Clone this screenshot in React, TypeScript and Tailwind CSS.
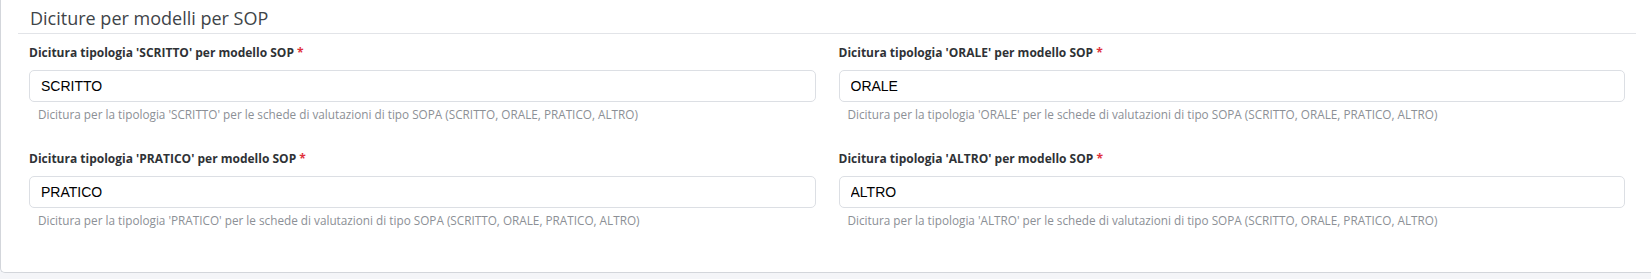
import React from "react";

const fields = [
  { key: "SCRITTO" },
  { key: "ORALE" },
  { key: "PRATICO" },
  { key: "ALTRO" },
];

function Field({ k }: { k: string }) {
  return (
    <div className="flex flex-col">
      <label className="pt-[2px] text-[12px] leading-[20px] font-bold text-[#2f3236] font-['Open_Sans',sans-serif]">
        Dicitura tipologia '{k}' per modello SOP <span className="text-[#e0313c]">*</span>
      </label>
      <input
        readOnly
        value={k}
        className="mt-[7px] h-[32px] w-full rounded-[5px] border border-[#dcdfe4] bg-white px-[11px] text-[14px] text-black outline-none font-['Liberation_Sans',Arial,sans-serif]"
      />
      <div className="mt-[3px] pl-[9px] text-[11.75px] leading-[18px] text-[#8c9096] font-['Open_Sans',sans-serif]">
        Dicitura per la tipologia '{k}' per le schede di valutazioni di tipo SOPA (SCRITTO, ORALE, PRATICO, ALTRO)
      </div>
    </div>
  );
}

export default function App() {
  return (
    <div className="w-[1651px] h-[279px] overflow-hidden bg-[#f4f5f8]">
      <div className="bg-white border-l border-b border-[#d3d6db] rounded-bl-[5px] pl-[17px] pr-[15px] pb-[43px]">
        <div className="h-[34px] border-b border-[#e2e4e8] pl-[12px] pt-[4px]">
          <h2 className="text-[18px] leading-[28px] font-normal text-[#404448] font-['Open_Sans',sans-serif]">
            Diciture per modelli per SOP
          </h2>
        </div>
        <div className="grid grid-cols-2 gap-x-[23px] gap-y-[24px] px-[11px] pt-[7px]">
          {fields.map((f) => (
            <Field key={f.key} k={f.key} />
          ))}
        </div>
      </div>
    </div>
  );
}
